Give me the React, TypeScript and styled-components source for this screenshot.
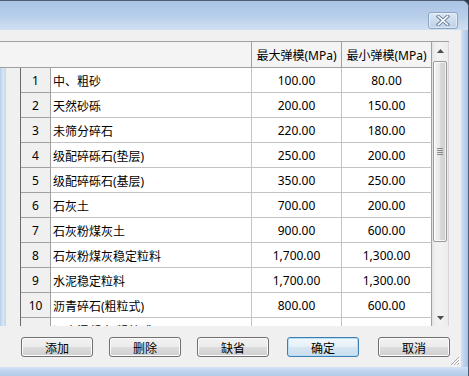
import React from 'react';
import styled, { createGlobalStyle } from 'styled-components';

const GlobalStyle = createGlobalStyle`
  html, body { margin: 0; padding: 0; }
  body {
    width: 469px;
    height: 376px;
    overflow: hidden;
    background: #2e3a48;
    font-family: "Noto Sans", "Noto Sans CJK SC", sans-serif;
    font-size: 12px;
    color: #000;
  }
  * { box-sizing: border-box; }
`;

const Window = styled.div`
  width: 469px;
  height: 376px;
  display: flex;
  flex-direction: column;
  border-top: 1px solid #4d5d72;
  border-right: 1px solid #4d5d72;
  border-top-right-radius: 7px;
  overflow: hidden;
  background: #c0d5ed;
`;

const TitleBar = styled.div`
  height: 29px;
  flex: none;
  display: flex;
  justify-content: flex-end;
  align-items: flex-start;
  padding: 11px 10px 0 0;
  background: linear-gradient(to bottom, #a9c3e4 0%, #b9d0eb 55%, #d0e0f2 100%);
`;

const CloseButton = styled.div`
  width: 30px;
  height: 17px;
  border: 1px solid #8ba4c2;
  border-radius: 3px;
  background: linear-gradient(to bottom, #dbe6f3 0%, #cddcee 50%, #bfd2ea 100%);
  box-shadow: inset 0 0 0 1px rgba(255, 255, 255, 0.45);
  display: flex;
  align-items: center;
  justify-content: center;
`;

const Middle = styled.div`
  flex: 1;
  display: flex;
  min-height: 0;
`;

const Client = styled.div`
  position: relative;
  width: 461px;
  flex: none;
  background: #f0f0f0;
  display: flex;
  flex-direction: column;
  padding-top: 11px;
`;

const RightFrame = styled.div`
  flex: 1;
  background: linear-gradient(to right, #d2e1f2, #b6cfeb 60%, #a4c2e6);
`;

const BottomFrame = styled.div`
  height: 9px;
  flex: none;
  background: linear-gradient(to bottom, #d4e3f3, #c0d5ee 40%, #b3cbe9);
`;

const Grid = styled.div`
  width: 449px;
  height: 285px;
  flex: none;
  display: flex;
  border-top: 1px solid #a0a0a0;
`;

const TableArea = styled.div`
  width: 432px;
  display: flex;
  flex-direction: column;
`;

const HeaderRow = styled.div`
  height: 26px;
  flex: none;
  display: grid;
  grid-template-columns: 252px 90px 90px;
  background: #f4f4f4;
  border-bottom: 1px solid #a0a0a0;
`;

const HeaderCell = styled.div`
  border-right: 1px solid #a0a0a0;
  display: flex;
  align-items: center;
  justify-content: center;
  white-space: nowrap;
  padding-top: 1px;
`;

const Body = styled.div`
  flex: 1;
  display: flex;
  overflow: hidden;
`;

const Stub = styled.div`
  width: 21px;
  flex: none;
  border-right: 1px solid #6a6a6a;
  background: linear-gradient(
    to right,
    #b7cfea 0px,
    #d9e6f5 3px,
    #c3d7ee 6px,
    #f0f0f0 6px,
    #f0f0f0 100%
  );
`;

const Rows = styled.div`
  flex: 1;
  display: flex;
  flex-direction: column;
`;

const Row = styled.div`
  height: 25px;
  flex: none;
  display: grid;
  grid-template-columns: 30px 201px 90px 90px;
`;

const NumCell = styled.div`
  background: #f0f0f0;
  border-right: 1px solid #a0a0a0;
  border-bottom: 1px solid #a0a0a0;
  display: flex;
  align-items: center;
  justify-content: center;
  padding-top: 1px;
`;

const DataCell = styled.div<{ $align: 'left' | 'center'; $last?: boolean }>`
  background: #fff;
  border-right: 1px solid ${(p) => (p.$last ? '#a0a0a0' : '#c4c4c4')};
  border-bottom: 1px solid #c4c4c4;
  display: flex;
  align-items: center;
  justify-content: ${(p) => (p.$align === 'left' ? 'flex-start' : 'center')};
  padding-left: ${(p) => (p.$align === 'left' ? '2px' : '0')};
  padding-top: 1px;
  white-space: nowrap;
  overflow: hidden;
`;

const Scrollbar = styled.div`
  width: 17px;
  flex: none;
  display: flex;
  flex-direction: column;
  background: linear-gradient(to right, #e2e2e2 0px, #efefef 3px, #f2f2f2 50%, #ececec 100%);
  border-right: 1px solid #d8d8d8;
`;

const ArrowButton = styled.div<{ $bottom?: boolean }>`
  height: 17px;
  flex: none;
  display: flex;
  align-items: center;
  justify-content: center;
  margin-top: ${(p) => (p.$bottom ? 'auto' : '0')};
`;

const Thumb = styled.div`
  margin: 2px 1px 0 1px;
  height: 181px;
  flex: none;
  border: 1px solid #9a9a9a;
  border-radius: 2px;
  background: linear-gradient(to right, #f4f4f4 0%, #e8e8e8 45%, #d9d9d9 55%, #cfcfcf 100%);
  box-shadow: inset 0 0 0 1px rgba(255, 255, 255, 0.7);
  display: flex;
  align-items: center;
  justify-content: center;
`;

const ButtonRow = styled.div`
  display: flex;
  margin-top: 11px;
  padding: 0 11px 0 21px;
  gap: 16px;
`;

const RightGroup = styled.div`
  display: flex;
  gap: 19px;
  margin-left: auto;
`;

const Button = styled.div<{ $default?: boolean }>`
  width: 72px;
  height: 20px;
  border: 1px solid ${(p) => (p.$default ? '#3c7fb1' : '#707070')};
  border-radius: 3px;
  background: ${(p) =>
    p.$default
      ? 'linear-gradient(to bottom, #f2f8fc 0%, #e6f0f8 50%, #d6e6f2 50%, #cadeee 100%)'
      : 'linear-gradient(to bottom, #f2f2f2 0%, #ebebeb 50%, #dddddd 50%, #cfcfcf 100%)'};
  box-shadow: inset 0 0 0 1px ${(p) => (p.$default ? '#b8def6' : '#fcfcfc')};
  display: flex;
  align-items: center;
  justify-content: center;
  padding-top: 1px;
`;

const Grip = styled.svg`
  position: absolute;
  right: 1px;
  bottom: 1px;
`;

type Item = { name: string; max: string; min: string };

const items: Item[] = [
  { name: '中、粗砂', max: '100.00', min: '80.00' },
  { name: '天然砂砾', max: '200.00', min: '150.00' },
  { name: '未筛分碎石', max: '220.00', min: '180.00' },
  { name: '级配碎砾石(垫层)', max: '250.00', min: '200.00' },
  { name: '级配碎砾石(基层)', max: '350.00', min: '250.00' },
  { name: '石灰土', max: '700.00', min: '200.00' },
  { name: '石灰粉煤灰土', max: '900.00', min: '600.00' },
  { name: '石灰粉煤灰稳定粒料', max: '1,700.00', min: '1,300.00' },
  { name: '水泥稳定粒料', max: '1,700.00', min: '1,300.00' },
  { name: '沥青碎石(粗粒式)', max: '800.00', min: '600.00' },
  { name: '沥青混凝土(粗粒式)', max: '1,000.00', min: '800.00' },
];

export default function App() {
  return (
    <>
      <GlobalStyle />
      <Window>
        <TitleBar>
          <CloseButton>
            <svg width="14" height="11" viewBox="0 0 14 11">
              <path d="M2.5 1.5 L11.5 9.5 M11.5 1.5 L2.5 9.5" stroke="#6f84a0" strokeWidth="3.6" strokeLinecap="square" fill="none" />
              <path d="M2.5 1.5 L11.5 9.5 M11.5 1.5 L2.5 9.5" stroke="#ffffff" strokeWidth="1.6" strokeLinecap="square" fill="none" />
            </svg>
          </CloseButton>
        </TitleBar>
        <Middle>
          <Client>
            <Grid>
              <TableArea>
                <HeaderRow>
                  <HeaderCell />
                  <HeaderCell>最大弹模(MPa)</HeaderCell>
                  <HeaderCell>最小弹模(MPa)</HeaderCell>
                </HeaderRow>
                <Body>
                  <Stub />
                  <Rows>
                    {items.map((it, i) => (
                      <Row key={i}>
                        <NumCell>{i + 1}</NumCell>
                        <DataCell $align="left">{it.name}</DataCell>
                        <DataCell $align="center">{it.max}</DataCell>
                        <DataCell $align="center" $last>{it.min}</DataCell>
                      </Row>
                    ))}
                  </Rows>
                </Body>
              </TableArea>
              <Scrollbar>
                <ArrowButton>
                  <svg width="7" height="4" viewBox="0 0 7 4">
                    <path d="M0 4 L3.5 0 L7 4 Z" fill="#4d4d4d" />
                  </svg>
                </ArrowButton>
                <Thumb>
                  <svg width="6" height="7" viewBox="0 0 6 7">
                    <path d="M0 0.5 H6 M0 2.5 H6 M0 4.5 H6 M0 6.5 H6" stroke="#8a8a8a" strokeWidth="1" />
                  </svg>
                </Thumb>
                <ArrowButton $bottom>
                  <svg width="7" height="4" viewBox="0 0 7 4">
                    <path d="M0 0 L7 0 L3.5 4 Z" fill="#4d4d4d" />
                  </svg>
                </ArrowButton>
              </Scrollbar>
            </Grid>
            <ButtonRow>
              <Button>添加</Button>
              <Button>删除</Button>
              <Button>缺省</Button>
              <RightGroup>
                <Button $default>确定</Button>
                <Button>取消</Button>
              </RightGroup>
            </ButtonRow>
            <Grip width="11" height="11" viewBox="0 0 11 11">
              <path d="M10 2 L2 10 M10 5 L5 10 M10 8 L8 10" stroke="#a8a8a8" strokeWidth="1" />
              <path d="M11 3 L3 11 M11 6 L6 11 M11 9 L9 11" stroke="#ffffff" strokeWidth="1" />
            </Grip>
          </Client>
          <RightFrame />
        </Middle>
        <BottomFrame />
      </Window>
    </>
  );
}
